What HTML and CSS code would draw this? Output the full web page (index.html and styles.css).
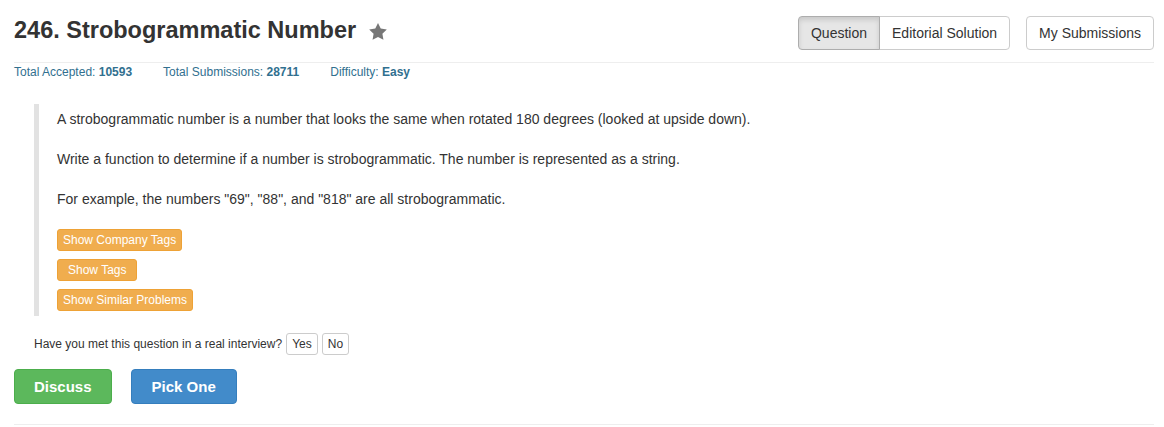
FILE: index.html
```html
<!DOCTYPE html>
<html lang="en">
<head>
<meta charset="utf-8">
<title>246. Strobogrammatic Number</title>
<link rel="stylesheet" href="styles.css">
</head>
<body>
<div class="container">
  <header class="header">
    <h3 class="title">246. Strobogrammatic Number
      <svg class="star" viewBox="2 2 20 19.3" width="18" height="17" aria-hidden="true"><path d="M12 2l3.09 6.26L22 9.27l-5 4.87 1.18 6.88L12 17.77l-6.18 3.25L7 14.14 2 9.27l6.91-1.01L12 2z"/></svg>
    </h3>
    <div class="nav">
      <div class="btn-group">
        <span class="btn active">Question</span><span class="btn">Editorial Solution</span>
      </div>
      <span class="btn single">My Submissions</span>
    </div>
  </header>
  <div class="stats">
    <span class="stat">Total Accepted: <b>10593</b></span>
    <span class="stat">Total Submissions: <b>28711</b></span>
    <span class="stat">Difficulty: <b>Easy</b></span>
  </div>
  <blockquote class="question">
    <p>A strobogrammatic number is a number that looks the same when rotated 180 degrees (looked at upside down).</p>
    <p>Write a function to determine if a number is strobogrammatic. The number is represented as a string.</p>
    <p>For example, the numbers "69", "88", and "818" are all strobogrammatic.</p>
    <div class="tags">
      <span class="btn-xs warning">Show Company Tags</span>
      <span class="btn-xs warning wide">Show Tags</span>
      <span class="btn-xs warning">Show Similar Problems</span>
    </div>
  </blockquote>
  <div class="interview">
    <span class="prompt">Have you met this question in a real interview?</span>
    <span class="btn-xs plain">Yes</span>
    <span class="btn-xs plain">No</span>
  </div>
  <div class="actions">
    <span class="btn-lg success">Discuss</span>
    <span class="btn-lg primary">Pick One</span>
  </div>
</div>
</body>
</html>
```
FILE: styles.css
```css
* { box-sizing: border-box; }
body {
  margin: 0;
  font-family: "Liberation Sans", Arial, sans-serif;
  font-size: 14px;
  color: #333;
  background: #fff;
}
.container {
  padding: 0 10px 0 14px;
}
.header {
  display: flex;
  justify-content: space-between;
  align-items: flex-start;
  padding-top: 16px;
  height: 63px;
  border-bottom: 1px solid #eee;
}
.title {
  margin: 1px 0 0;
  font-size: 23.5px;
  line-height: 26px;
  font-weight: 700;
  color: #333;
  display: flex;
  align-items: center;
}
.star {
  fill: #777;
  margin-left: 13px;
  margin-top: 2px;
}
.nav {
  display: flex;
  gap: 16px;
}
.btn-group {
  display: flex;
}
.btn {
  display: inline-block;
  padding: 6px 12px;
  font-size: 14px;
  line-height: 20px;
  border: 1px solid #ccc;
  background: #fff;
  color: #333;
  border-radius: 4px;
  white-space: nowrap;
}
.btn-group .btn:first-child {
  border-top-right-radius: 0;
  border-bottom-right-radius: 0;
}
.btn-group .btn + .btn {
  margin-left: -1px;
  border-top-left-radius: 0;
  border-bottom-left-radius: 0;
}
.btn.active {
  background: #e6e6e6;
  border-color: #adadad;
  box-shadow: inset 0 3px 5px rgba(0, 0, 0, 0.125);
  position: relative;
  z-index: 1;
}
.stats {
  display: flex;
  font-size: 12px;
  line-height: 17px;
  color: #31708f;
  margin-top: 1px;
}
.stat { margin-right: 31px; }
.stats b { font-weight: 700; }
.question {
  margin: 23px 0 0 20px;
  padding: 5px 0 5px 18px;
  border-left: 5px solid #e2e2e2;
}
.question p {
  margin: 0 0 20px;
  line-height: 20px;
}
.tags {
  display: flex;
  flex-direction: column;
  align-items: flex-start;
  gap: 8px;
}
.btn-xs {
  display: inline-block;
  padding: 1px 5px;
  font-size: 12px;
  line-height: 18px;
  border-radius: 3px;
  border: 1px solid #ccc;
  white-space: nowrap;
}
.warning {
  background: #f0ad4e;
  border-color: #eea236;
  color: #fff;
}
.wide { padding: 1px 10px; }
.plain {
  background: #fff;
  color: #333;
}
.interview {
  display: flex;
  align-items: center;
  gap: 4px;
  margin: 17px 0 0 20px;
  font-size: 12px;
}
.actions {
  display: flex;
  gap: 19px;
  margin-top: 14px;
  padding-bottom: 20px;
  border-bottom: 1px solid #eee;
}
.btn-lg {
  display: inline-block;
  padding: 7px 19px;
  font-size: 15px;
  line-height: 19px;
  font-weight: 700;
  color: #fff;
  border-radius: 4px;
  border: 1px solid transparent;
}
.success { background: #5cb85c; border-color: #4cae4c; }
.primary { padding: 7px 20px; background: #428bca; border-color: #357ebd; }
```
